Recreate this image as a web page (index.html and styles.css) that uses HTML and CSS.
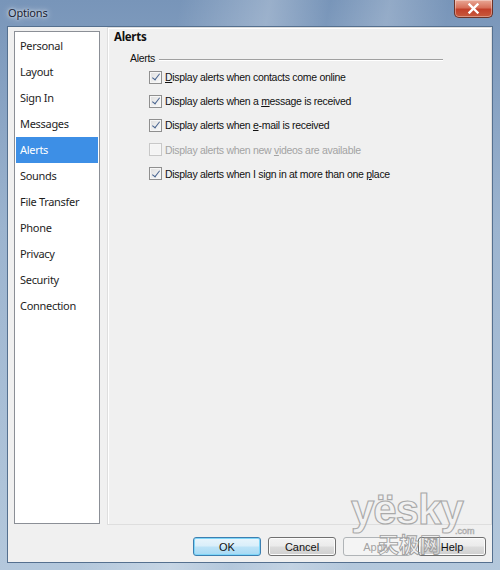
FILE: index.html
```html
<!DOCTYPE html>
<html>
<head>
<meta charset="utf-8">
<link rel="stylesheet" href="styles.css">
</head>
<body>
<div class="window">
  <div class="titlebar">
    <span class="title">Options</span>
    <div class="close">
      <svg width="13" height="11" viewBox="0 0 13 11"><path d="M2.5 1.5 L10.5 9.5 M10.5 1.5 L2.5 9.5" stroke="#fff" stroke-width="2.4" stroke-linecap="square" fill="none"/></svg>
    </div>
  </div>
  <div class="client">
    <div class="main">
      <ul class="sidebar">
        <li class="item">Personal</li>
        <li class="item">Layout</li>
        <li class="item">Sign In</li>
        <li class="item">Messages</li>
        <li class="item selected">Alerts</li>
        <li class="item">Sounds</li>
        <li class="item">File Transfer</li>
        <li class="item">Phone</li>
        <li class="item">Privacy</li>
        <li class="item">Security</li>
        <li class="item">Connection</li>
      </ul>
      <div class="panel">
        <div class="heading">Alerts</div>
        <div class="group">
          <div class="group-label"><span>Alerts</span><div class="rule"></div></div>
          <label class="check"><span class="box on"></span><span><u>D</u>isplay alerts when contacts come online</span></label>
          <label class="check"><span class="box on"></span><span>Display alerts when a <u>m</u>essage is received</span></label>
          <label class="check"><span class="box on"></span><span>Display alerts when <u>e</u>-mail is received</span></label>
          <label class="check disabled"><span class="box"></span><span>Display alerts when new <u>v</u>ideos are available</span></label>
          <label class="check"><span class="box on"></span><span>Display alerts when I sign in at more than one <u>p</u>lace</span></label>
        </div>
      </div>
    </div>
    <div class="buttons">
      <button class="btn default">OK</button>
      <button class="btn">Cancel</button>
      <button class="btn" disabled>Apply</button>
      <button class="btn">Help</button>
    </div>
  </div>
  <div class="watermark">
    <span class="wm-main">yësky</span>
    <span class="wm-com">.com</span>
    <span class="wm-cn">天极网</span>
  </div>
</div>
</body>
</html>
```
FILE: styles.css
```css
* { box-sizing: border-box; }
body { margin: 0; }

.window {
  position: relative;
  width: 500px;
  height: 570px;
  display: flex;
  flex-direction: column;
  overflow: hidden;
  background:
    linear-gradient(100deg, rgba(255,255,255,0) 30%, rgba(255,255,255,0.25) 45%, rgba(255,255,255,0) 55%, rgba(255,255,255,0.2) 65%, rgba(255,255,255,0) 75%),
    linear-gradient(180deg, #7895b9 0%, #9cb4cf 40%, #b4c8dc 100%);
  font-family: "Noto Sans", sans-serif;
}

.titlebar {
  height: 26px;
  display: flex;
  justify-content: space-between;
  align-items: flex-start;
  padding-left: 8px;
}
.title {
  font-size: 11px;
  letter-spacing: -0.2px;
  line-height: 25px;
  color: #1a2232;
  text-shadow: 0 0 6px rgba(255,255,255,0.9), 0 0 3px rgba(255,255,255,0.8);
}
.close {
  width: 39px;
  height: 18px;
  margin-right: 7px;
  border: 1px solid #6b3328;
  border-top: none;
  border-radius: 0 0 5px 5px;
  background: linear-gradient(180deg, #e9a896 0%, #d7705a 45%, #c2402a 55%, #c75a3d 100%);
  box-shadow: inset 0 0 0 1px rgba(255,255,255,0.35);
  display: flex;
  align-items: center;
  justify-content: center;
}

.client {
  flex: 1;
  margin: 0 7px 7px 7px;
  border: 1px solid #55708f;
  background: #f0f0f0;
  display: flex;
  flex-direction: column;
}

.main {
  flex: 1;
  display: flex;
}

.sidebar {
  list-style: none;
  margin: 4px 0 1px 6px;
  padding: 1px 1px;
  width: 86px;
  border: 1px solid #8b8f96;
  background: #fff;
  font-size: 11px;
  letter-spacing: -0.3px;
  color: #1e1e1e;
}
.item {
  height: 26px;
  line-height: 26px;
  padding-left: 4px;
  white-space: nowrap;
}
.item.selected {
  background: #3d8fe6;
  color: #fff;
}

.panel {
  flex: 1;
  margin-left: 7px;
  border: 1px solid #dedede;
  box-shadow: inset 1px 1px 0 #fff;
  padding: 1px 6px;
}
.heading {
  font-weight: bold;
  font-size: 11.5px;
  letter-spacing: -0.3px;
  line-height: 16px;
  color: #111;
}

.group {
  margin: 6px 0 0 16px;
  width: 313px;
  font-family: "Liberation Sans", Arial, sans-serif;
  font-size: 10.5px;
  letter-spacing: -0.3px;
  color: #111;
}
.group-label {
  display: flex;
  align-items: center;
  height: 14px;
}
.rule {
  flex: 1;
  height: 1px;
  margin-left: 4px;
  margin-top: 2px;
  background: #a0a0a0;
  box-shadow: 0 1px 0 #fff;
}
.check {
  display: flex;
  align-items: center;
  height: 24.2px;
  padding-left: 19px;
  white-space: nowrap;
}
.box {
  width: 13px;
  height: 13px;
  margin-right: 3px;
  border: 1px solid #8f8f8f;
  background: linear-gradient(135deg, #dedede, #fbfbfb);
  box-shadow: inset 0 0 0 1px #f6f6f6;
  flex: none;
  position: relative;
}
.box.on::after {
  content: "";
  position: absolute;
  left: 3.5px;
  top: 0.5px;
  width: 3px;
  height: 7px;
  border: solid #4a6590;
  border-width: 0 1.6px 1.6px 0;
  transform: rotate(38deg);
}
.check.disabled { color: #a3a3a3; }
.check.disabled .box {
  border-color: #c8c8c8;
  background: #f4f4f4;
}

.buttons {
  display: flex;
  justify-content: flex-end;
  gap: 7px;
  padding: 12px 6px 6px;
}
.btn {
  width: 68px;
  height: 19px;
  padding: 0;
  border: 1px solid #707070;
  border-radius: 3px;
  background: linear-gradient(180deg, #f3f3f3 0%, #ebebeb 48%, #dcdcdc 52%, #cfcfcf 100%);
  box-shadow: inset 0 0 0 1px #fcfcfc;
  font-family: "Liberation Sans", Arial, sans-serif;
  font-size: 11px;
  color: #111;
}
.btn.default {
  border-color: #3c7fb1;
  background: linear-gradient(180deg, #e9f5fc 0%, #d9eefa 48%, #bde3f7 52%, #a6d9f4 100%);
  box-shadow: inset 0 0 0 1px #7fd6f8;
}
.btn:disabled {
  border-color: #b0b4b7;
  background: #f4f4f4;
  box-shadow: none;
  color: #a3a3a3;
}

.watermark {
  position: absolute;
  left: 351px;
  top: 488px;
  width: 140px;
  height: 76px;
  pointer-events: none;
}
.wm-main {
  position: absolute;
  left: 0;
  top: 0;
  font-family: "Liberation Sans", Arial, sans-serif;
  font-weight: bold;
  font-size: 42px;
  line-height: 44px;
  letter-spacing: -1px;
  color: rgba(245,245,245,0.35);
  -webkit-text-stroke: 1.1px #a9a9a9;
}
.wm-com {
  position: absolute;
  left: 104px;
  top: 38px;
  font-family: "Liberation Sans", Arial, sans-serif;
  font-size: 9px;
  color: transparent;
  -webkit-text-stroke: 0.6px #a9a9a9;
}
.wm-cn {
  position: absolute;
  left: 27px;
  top: 43px;
  font-family: "Noto Sans CJK SC", sans-serif;
  font-weight: bold;
  font-size: 21px;
  line-height: 24px;
  color: transparent;
  -webkit-text-stroke: 0.9px #9f9f9f;
}
```
